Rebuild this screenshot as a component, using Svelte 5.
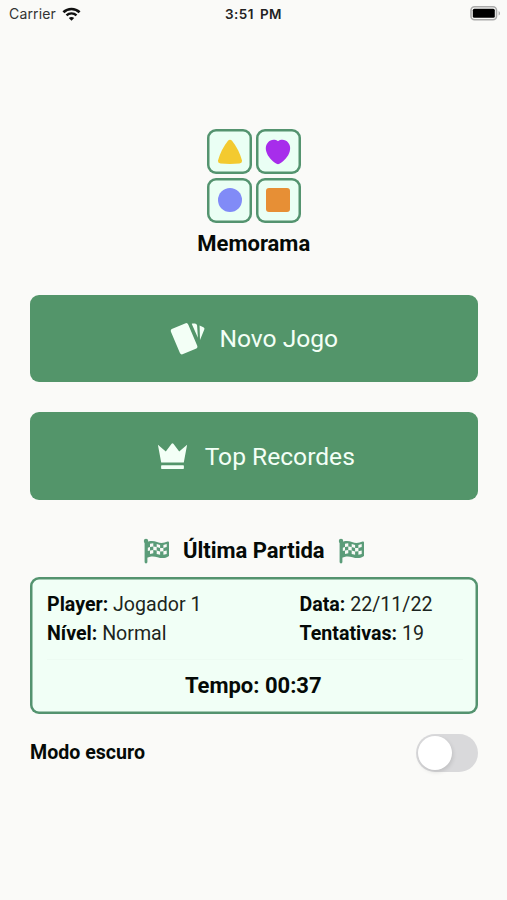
<script lang="ts">
  let darkMode = $state(false);

  const lastMatch = {
    player: 'Jogador 1',
    level: 'Normal',
    date: '22/11/22',
    attempts: 19,
    time: '00:37'
  };
</script>

{#snippet flag()}
  <svg class="flag" width="27" height="26" viewBox="0 0 27 26" aria-hidden="true">
    <path d="M3 3v21" stroke="currentColor" stroke-width="2.8" stroke-linecap="round" />
    <circle cx="3" cy="3" r="2.2" fill="currentColor" />
    <path
      fill="currentColor"
      fill-rule="evenodd"
      d="M3 4.6C7 2.6 10.500 2.800 14 4.100C18 5.500 21 5.100 24.600 3.500C25.500 3.200 26 3.600 26 4.400V18C22 20.700 18.500 20.500 14.500 19.200C10.500 17.900 7 18.200 3 20ZM7 5.700V9L10.300 8.400V5.200ZM13.700 5.900V9.100L17.100 10V6.900ZM20.400 6.900V10L23.700 9V6ZM10.300 8.400V11.900L13.700 12.500V9.100ZM17.100 10V13.400L20.400 13.300V10ZM7 12.500V15.900L10.300 15.300V11.900ZM13.700 12.500V15.900L17.100 16.800V13.400ZM20.400 13.300V16.800L23.700 15.900V12.500ZM4.700 9.700V13.100L7 12.500V9Z"
    />
  </svg>
{/snippet}

<header class="status">
  <span class="carrier">
    Carrier
    <svg width="19" height="14" viewBox="0 0 19 14" fill="none" stroke="#111" aria-hidden="true">
      <path d="M1.400 5.300C5.900.900 13.100.900 17.600 5.300" stroke-width="2.600" />
      <path d="M4.500 8.400C7.300 5.700 11.700 5.700 14.500 8.400" stroke-width="2.400" />
      <path d="M9.500 13.700L6.800 10.900C8.300 9.600 10.700 9.600 12.200 10.900Z" fill="#111" stroke="none" />
    </svg>
  </span>
  <span class="clock">3:51 PM</span>
  <svg class="battery" width="31" height="15" viewBox="0 0 31 15" aria-hidden="true">
    <rect x="1" y=".8" width="25.500" height="13" rx="3.500" fill="none" stroke="#aaa" stroke-width="1.600" />
    <rect x="2.800" y="2.800" width="22" height="9" rx="1.500" fill="#000" />
    <path d="M28.600 5v4.600C30.500 8.700 30.500 5.900 28.600 5Z" fill="#aaa" />
  </svg>
</header>

<main>
  <section class="brand">
    <div class="tiles">
      <div class="tile">
        <svg width="26" height="26" viewBox="0 0 26 26">
          <path d="M10.800 2Q13-.600 15.200 2Q22 10.500 25 21.500Q25.300 24.200 22.500 24.600Q13 25.400 3.500 24.600Q.700 24.200 1 21.500Q4 10.500 10.800 2Z" fill="#f3ca2f" />
        </svg>
      </div>
      <div class="tile">
        <svg width="26" height="26" viewBox="0 0 26 26">
          <path d="M13 2.200C15 .900 18 .300 20.500 1.600C24.500 3.600 26 8 24.700 12.500C23.400 17.500 19 22 14.400 24.800Q13 25.600 11.600 24.800C7 22 2.600 17.500 1.300 12.500C0 8 1.500 3.600 5.500 1.600C8 .300 11 .900 13 2.200Z" fill="#a72deb" />
        </svg>
      </div>
      <div class="tile">
        <svg width="26" height="26" viewBox="0 0 26 26">
          <circle cx="13" cy="13" r="12" fill="#818bf7" />
        </svg>
      </div>
      <div class="tile">
        <svg width="26" height="26" viewBox="0 0 26 26">
          <rect x="1" y="1" width="24" height="24" rx="3" fill="#e78f35" />
        </svg>
      </div>
    </div>
    <h1>Memorama</h1>
  </section>

  <nav>
    <button class="action new-game">
      <svg width="36" height="34" viewBox="0 0 36 34" fill="currentColor" aria-hidden="true">
        <rect x="5.700" y="3" width="18.800" height="27.500" rx="2.500" transform="rotate(-23 15.100 16.800)" />
        <path d="M23.300 1.400L26 1.400Q28 1.600 28.100 3.600L28.900 15.800L22.800 2Q22.800 1.500 23.300 1.400Z" />
        <path d="M30.600 3.600L34.400 5.200Q36 6 35.300 7.600L31 18Z" />
      </svg>
      <span>Novo Jogo</span>
    </button>
    <button class="action records">
      <svg width="31" height="27" viewBox="0 0 31 27" fill="currentColor" aria-hidden="true">
        <path d="M.900 1.700L8.800 8.600L14.600.700Q15.500-.200 16.400.700L22.200 8.600L30.100 1.700L26.800 19.500H4.200Z" />
        <rect x="4.100" y="22.300" width="22.800" height="3.600" rx=".7" />
      </svg>
      <span>Top Recordes</span>
    </button>
  </nav>

  <section class="last">
    <div class="last-head">
      {@render flag()}
      <h2>Última Partida</h2>
      {@render flag()}
    </div>

    <div class="card">
      <div class="details">
        <p><b>Player:</b> {lastMatch.player}</p>
        <p><b>Data:</b> {lastMatch.date}</p>
        <p><b>Nível:</b> {lastMatch.level}</p>
        <p><b>Tentativas:</b> {lastMatch.attempts}</p>
      </div>
      <p class="time">Tempo: {lastMatch.time}</p>
    </div>
  </section>

  <div class="theme">
    <span id="theme-label">Modo escuro</span>
    <button
      class="switch"
      class:on={darkMode}
      role="switch"
      aria-checked={darkMode}
      aria-labelledby="theme-label"
      onclick={() => (darkMode = !darkMode)}
    >
      <span class="knob"></span>
    </button>
  </div>
</main>

<style>
  :global(body) {
    background: #fafaf8;
  }

  .status {
    display: grid;
    grid-template-columns: 1fr auto 1fr;
    align-items: center;
    height: 27px;
    padding: 0 6px 0 9px;
    font-family: Inter, sans-serif;
    font-size: 14px;
    color: #333;
  }

  .carrier {
    display: flex;
    align-items: center;
    gap: 6px;
    letter-spacing: 0.15px;
  }

  .clock {
    padding-right: 3px;
    font-size: 13.500px;
    font-weight: 600;
    letter-spacing: 0.5px;
    word-spacing: 2px;
    color: #222;
  }

  .battery {
    justify-self: end;
  }

  main {
    height: 873px;
    box-sizing: border-box;
    padding: 102px 29.500px 0 30px;
    font-family: Roboto, sans-serif;
    color: #050a07;
  }

  .brand {
    display: flex;
    flex-direction: column;
    align-items: center;
  }

  .tiles {
    display: grid;
    grid-template-columns: repeat(2, 45px);
    gap: 3.500px;
  }

  .tile {
    display: flex;
    align-items: center;
    justify-content: center;
    height: 45px;
    border-radius: 9px;
    background: #eafff4;
    box-shadow: inset 0 0 0 2.500px #54936f;
  }

  h1,
  h2,
  .time {
    margin: 0;
    font-size: 22px;
    font-weight: 700;
    line-height: 26px;
    white-space: nowrap;
  }

  h1 {
    margin-top: 8px;
  }

  nav {
    display: flex;
    flex-direction: column;
    gap: 30px;
    margin-top: 38px;
  }

  .action {
    display: flex;
    align-items: center;
    justify-content: center;
    height: 87.500px;
    padding: 1px 0 0;
    border: none;
    border-radius: 9px;
    background: #53956a;
    color: #f3fff6;
    font-family: inherit;
    font-size: 24.600px;
    cursor: pointer;
  }

  .new-game {
    gap: 14px;
  }

  .records {
    gap: 17px;
    padding-left: 4px;
  }

  .last-head {
    display: flex;
    align-items: center;
    justify-content: center;
    gap: 13px;
    height: 28px;
    margin-top: 37px;
  }

  .flag {
    color: #5b9c79;
  }

  .card {
    height: 137px;
    margin-top: 12px;
    box-sizing: border-box;
    padding: 13px 15px 0 17px;
    border-radius: 9px;
    background: #f1fff6;
    box-shadow: inset 0 0 0 2.500px #54936f;
  }

  .details {
    display: grid;
    grid-template-columns: 252.500px 1fr;
    padding-bottom: 10px;
    border-bottom: 1px solid #edfbf2;
  }

  .details p {
    margin: 0;
    font-size: 19.600px;
    line-height: 29.500px;
    color: #1c2520;
    white-space: nowrap;
  }

  .details b {
    color: #050a07;
  }

  .time {
    margin-top: 13px;
    margin-right: 3px;
    text-align: center;
  }

  .theme {
    display: flex;
    align-items: center;
    justify-content: space-between;
    height: 38px;
    margin-top: 20px;
    font-size: 19.600px;
    font-weight: 700;
  }

  .switch {
    width: 62px;
    height: 38px;
    padding: 2px;
    border: none;
    border-radius: 19px;
    background: #d9d9db;
    cursor: pointer;
  }

  .knob {
    display: block;
    width: 34px;
    height: 34px;
    border-radius: 50%;
    background: #fff;
    box-shadow: 1px 2px 4px rgba(0, 0, 0, 0.12);
    transition: transform 0.2s;
  }

  .on {
    background: #53956a;
  }

  .on .knob {
    transform: translateX(24px);
  }
</style>
